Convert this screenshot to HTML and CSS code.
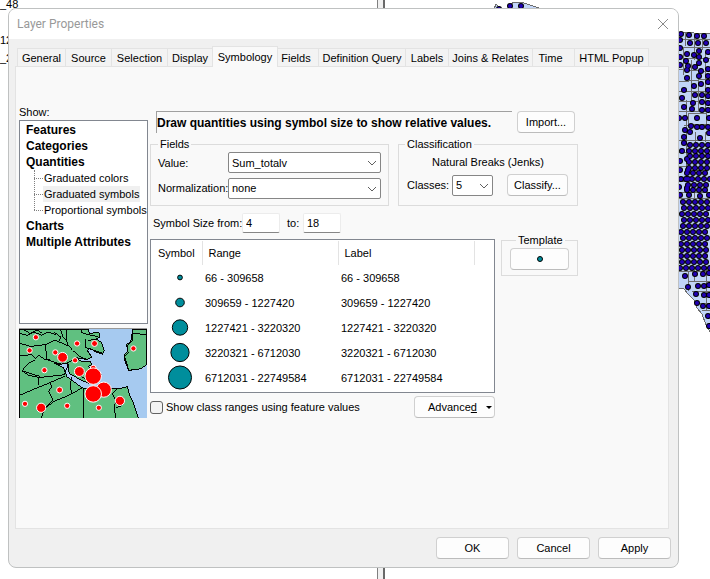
FILE: index.html
```html
<!DOCTYPE html>
<html lang="en">
<head>
<meta charset="utf-8">
<meta name="viewport" content="width=device-width, initial-scale=1">
<title>Layer Properties</title>
<link rel="stylesheet" href="styles.css">
</head>
<body>
<div class="desktop" aria-hidden="true">
  <div class="toc"><span>_48</span><span>12</span><span>_2</span></div>
  <div class="splitter"></div>
  <svg class="city" viewBox="490 0 220 340" width="220" height="340">
    <path class="ground" d="M494 9L496 4L498 6L502 9ZM508 9L513 2L524 3L542 9ZM678 32L710 34V332L706 325L702 314L697 308L694 300L688 294L684 289L678 288Z"/>
    <path class="streets" d="M678 39H710M678 47H710M683 58H710M678 69L710 72M678 82L710 79M678 91H710M678 101H710M678 111H710M688 113H706V124H688ZM684 125H710M678 140H710M678 152H686M678 166H686M678 181H686M694 192V199M678 192H710M678 198H710M678 271H710M688 281H710M692 291H710M699 303H710M702 310H710M685 33V46M694 34V60M702 34V50M683 47V75M691 60V112M698 70V112M705 52V112M686 100V180M695 132V142M705 132V142M694 270V282M706 268V310M688 271V291"/>
    <g class="dots-edge"><path id="pts" d="M510 6h0M521 6h0M499 9h0M681 34h0M689 35h0M697 36h0M704 36h0M680 40h0M690 43h0M698 43h0M706 43h0M680 48h0M687 54h0M694 55h0M699 51h0M708 52h0M680 57h0M686 61h0M699 57h0M706 60h0M680 65h0M688 66h0M695 67h0M687 70h0M701 71h0M708 69h0M699 63h0M687 78h0M699 76h0M708 76h0M694 86h0M701 84h0M708 82h0M684 90h0M708 90h0M682 98h0M695 95h0M702 95h0M708 96h0M693 103h0M702 102h0M708 103h0M684 107h0M692 109h0M702 110h0M708 110h0M679 118h0M685 118h0M697 118h0M709 118h0M685 130h0M691 126h0M697 127h0M702 127h0M708 127h0M690 132h0M684 137h0M700 138h0M709 133h0M684 143h0M682 151h0M680 161h0M687 159h0M680 170h0M688 170h0M681 179h0M688 179h0M679 187h0M687 188h0M680 195h0M689 195h0M700 196h0M709 195h0M685 276h0M695 274h0M703 274h0M709 273h0M688 287h0M698 286h0M704 286h0M709 285h0M696 294h0M704 295h0M709 295h0M697 303h0M703 306h0M709 306h0M708 316h0M709 326h0"/>
    <path id="rows" class="rows" d="M690 139V139M690 145H711M689 151H711M690 156H711M689 162H711M689 168H711M687 173H711M686 179H711M688 185H711M687 190H711M683 202H711M684 208H711M682 214H711M684 220H711M683 226H711M681 232H711M683 238H711M681 244H711M682 250H711M681 256H711M682 262H711M680 268H711"/></g>
    <g class="dots-fill"><use href="#pts"/><use href="#rows"/></g>
  </svg>
</div>

<main class="dialog" role="dialog" aria-labelledby="title">
  <header class="titlebar">
    <h1 id="title">Layer Properties</h1>
    <button class="close" aria-label="Close"><svg viewBox="0 0 12 12" width="12" height="12"><path d="M1 1L11 11M11 1L1 11"/></svg></button>
  </header>

  <div class="body">
    <nav class="tabs" role="tablist">
      <button role="tab">General</button>
      <button role="tab">Source</button>
      <button role="tab">Selection</button>
      <button role="tab">Display</button>
      <button role="tab" class="active" aria-selected="true">Symbology</button>
      <button role="tab" class="after">Fields</button>
      <button role="tab">Definition Query</button>
      <button role="tab">Labels</button>
      <button role="tab">Joins &amp; Relates</button>
      <button role="tab" class="time">Time</button>
      <button role="tab">HTML Popup</button>
    </nav>

    <section class="panel" role="tabpanel">
      <div class="side">
        <span class="show-label" id="show">Show:</span>
        <ul class="tree" aria-labelledby="show">
          <li>Features</li>
          <li>Categories</li>
          <li>Quantities
            <ul class="branch">
              <li><span>Graduated colors</span></li>
              <li><span class="selected">Graduated symbols</span></li>
              <li><span>Proportional symbols</span></li>
            </ul>
          </li>
          <li>Charts</li>
          <li>Multiple Attributes</li>
        </ul>
        <svg class="preview" viewBox="57 25 384 270" role="img" aria-label="Graduated symbols preview">
          <path class="land" d="M57 25H265L268 38L298 36L300 50L288 55L306 66L314 90L308 103L290 96L270 84L262 90L276 110L262 118L228 112L244 124L272 124L276 134L264 138L304 160L296 186L270 192L236 176L208 160L200 130L176 132L160 128L190 142L200 170L248 204L290 206L340 204L366 204L384 200L390 226L400 244L417 295H57Z"/>
          <path class="land" d="M400 25H441V134L424 146L404 148L388 151L375 120L374 105L385 90L382 72L394 62Z"/>
          <path class="bounds" d="M57 38L80 44L100 34L124 44L142 34L166 42L162 34M57 68L90 78L136 72L160 60L176 62L182 50L166 36M70 28L88 38L110 28L126 38M180 25L188 50L200 60L198 34L202 25M198 58L204 74L218 90L242 110L262 118L276 110L262 92M242 25L246 36L262 42L296 48M57 104L78 106L92 100L104 114L114 106L132 118H150M136 74L138 118L176 130L190 126M176 64L204 76M222 116L202 126L206 142M104 118L80 132L64 152L84 166L118 172L192 164L200 142M64 152L116 168L114 196M57 226L104 206L148 188L194 168M150 186L154 202L144 214L158 240L134 266L122 295M138 262L162 244L206 226L250 202M216 170L210 194L214 220M250 206L250 295M350 208L338 220L348 242L344 264L348 295M348 264L366 258M384 200L390 226L400 244L417 295M402 38L441 42M258 54V82L306 98M264 60L290 56M224 150L238 166L258 178M400 25L400 58L382 78L386 96L375 108L388 150L406 148"/>
          <g class="halo">
            <circle cx="106" cy="50" r="8"/><circle cx="87" cy="90" r="8"/><circle cx="165" cy="96" r="8"/><circle cx="231" cy="69" r="8"/><circle cx="284" cy="69" r="9"/><circle cx="402" cy="84" r="8"/><circle cx="225" cy="120" r="8"/><circle cx="132" cy="150" r="8"/><circle cx="187" cy="111" r="15"/><circle cx="238" cy="154" r="15"/><circle cx="280" cy="144" r="9"/><circle cx="280" cy="168" r="25"/><circle cx="312" cy="209" r="23"/><circle cx="280" cy="222" r="25"/><circle cx="178" cy="210" r="9"/><circle cx="73" cy="252" r="8"/><circle cx="122" cy="264" r="14"/><circle cx="201" cy="258" r="8"/><circle cx="297" cy="264" r="8"/><circle cx="361" cy="243" r="14"/>
          </g>
        </svg>
      </div>

      <div class="main">
        <div class="headline">
          <h2>Draw quantities using symbol size to show relative values.</h2>
          <button class="btn">Import...</button>
        </div>

        <div class="groups">
          <fieldset class="fields">
            <legend>Fields</legend>
            <label for="value">Value:</label>
            <span class="combo"><select id="value"><option>Sum_totalv</option></select><svg viewBox="0 0 10 6"><path d="M1 1L5 5L9 1"/></svg></span>
            <label for="norm">Normalization:</label>
            <span class="combo"><select id="norm"><option>none</option></select><svg viewBox="0 0 10 6"><path d="M1 1L5 5L9 1"/></svg></span>
          </fieldset>
          <fieldset class="classification">
            <legend>Classification</legend>
            <p>Natural Breaks (Jenks)</p>
            <div class="classes">
              <label for="classes">Classes:</label>
              <span class="combo"><select id="classes"><option>5</option></select><svg viewBox="0 0 10 6"><path d="M1 1L5 5L9 1"/></svg></span>
              <button class="btn">Classify...</button>
            </div>
          </fieldset>
        </div>

        <div class="sizes">
          <label for="from">Symbol Size from:</label><input id="from" type="text" value="4">
          <label for="to">to:</label><input id="to" type="text" value="18">
        </div>

        <div class="ranges">
          <div class="list">
            <table>
              <thead><tr><th class="c-symbol">Symbol</th><th class="c-range">Range</th><th class="c-label">Label</th><th class="c-rest"></th></tr></thead>
              <tbody>
                <tr><td><svg viewBox="-13 -13 26 26"><circle r="2.5"/></svg></td><td>66 - 309658</td><td>66 - 309658</td><td></td></tr>
                <tr><td><svg viewBox="-13 -13 26 26"><circle r="4.5"/></svg></td><td>309659 - 1227420</td><td>309659 - 1227420</td><td></td></tr>
                <tr><td><svg viewBox="-13 -13 26 26"><circle r="8"/></svg></td><td>1227421 - 3220320</td><td>1227421 - 3220320</td><td></td></tr>
                <tr><td><svg viewBox="-13 -13 26 26"><circle r="9.5"/></svg></td><td>3220321 - 6712030</td><td>3220321 - 6712030</td><td></td></tr>
                <tr><td><svg viewBox="-13 -13 26 26"><circle r="12"/></svg></td><td>6712031 - 22749584</td><td>6712031 - 22749584</td><td></td></tr>
              </tbody>
            </table>
          </div>
          <fieldset class="template">
            <legend>Template</legend>
            <button class="btn" aria-label="Template symbol"><svg viewBox="-4 -4 8 8" width="8" height="8"><circle r="2.5"/></svg></button>
          </fieldset>
        </div>

        <div class="options">
          <label><input type="checkbox">Show class ranges using feature values</label>
          <button class="btn advanced"><span>Advance<u>d</u></span><svg viewBox="0 0 6 3" width="6" height="3"><path d="M0 0H6L3 3Z"/></svg></button>
        </div>
      </div>
    </section>

    <footer class="actions">
      <button class="btn">OK</button>
      <button class="btn">Cancel</button>
      <button class="btn">Apply</button>
    </footer>
  </div>
</main>
</body>
</html>
```
FILE: styles.css
```css
* { box-sizing: border-box; }
body {
  margin: 0;
  min-height: 100vh;
  display: flex;
  flex-direction: column;
  background: #fff;
  color: #000;
  font: 11px/16px "Liberation Sans", Arial, sans-serif;
  overflow: hidden;
}
button, input, select { font: inherit; color: inherit; margin: 0; }
h1, h2, p, ul { margin: 0; padding: 0; }
ul { list-style: none; }

/* Application window behind the dialog */
.desktop { position: absolute; inset: 0; overflow: hidden; }
.toc { position: absolute; left: -5px; top: -4px; display: grid; grid-template-rows: 36px 18px 18px; }
.toc { left: 0; }
.splitter {
  position: absolute; left: 377px; top: 0; bottom: 0; width: 8px;
  background: #f0f0f0; border-left: 1px solid #808080; border-right: 2px solid #696969;
}
.city { position: absolute; left: 490px; top: 0; shape-rendering: crispEdges; }
.ground { fill: #c2d5f8; stroke: #6e6e6e; }
.streets { fill: none; stroke: #6e6e6e; }
.dots-edge, .dots-fill { shape-rendering: auto; stroke-linecap: round; }
.dots-edge { stroke: #000; stroke-width: 6; }
.dots-fill { stroke: #2100b5; stroke-width: 4; }
.rows { stroke-dasharray: 0 6; }

/* Dialog frame */
.dialog {
  position: relative;
  flex: 1;
  margin: 8px 31px 11px 8px;
  display: flex;
  flex-direction: column;
  background: #f0f0f0;
  border: 1px solid #bfc1c1;
  border-radius: 8px;
  overflow: hidden;
}
.titlebar {
  display: flex; justify-content: space-between; align-items: center;
  height: 30px; padding: 0 9px 0 8px; background: #fff;
}
.titlebar h1 { font: 400 12px/16px Roboto, sans-serif; color: #999; }
.close { display: flex; padding: 0; border: 0; background: none; }
.close svg { fill: none; stroke: #8a8a8a; }
.body { flex: 1; display: flex; flex-direction: column; padding: 7px 7px 8px 6px; }

/* Tabs */
.tabs {
  display: grid;
  grid-template-columns: 48px 46px 56px 45px 66px 40px 87px 43px 84px 42px 75px;
  align-items: end;
  padding-left: 2px;
  height: 20px;
}
.tabs button {
  height: 18px; padding: 0; border: 1px solid #e3e3e3; border-width: 1px 0 0 1px;
  background: #f3f3f3; white-space: nowrap; line-height: 18px;
}
.tabs button:last-child { border-right-width: 1px; }
.tabs .active {
  height: 21px; margin-bottom: -1px; z-index: 1; background: #f9f9f9; border-right-width: 1px;
}
.tabs .after { border-left: 0; padding-right: 4px; }
.tabs .time { padding-right: 6px; }

.panel {
  flex: 1; display: grid; grid-template-columns: 129px minmax(0, 1fr); gap: 2px;
  margin-right: 2px; padding: 37px 3px 0;
  background: #f9f9f9; border: 1px solid #e3e3e3;
}

/* Left column */
.side { display: flex; flex-direction: column; }
.show-label { height: 16px; }
.tree {
  height: 204px; padding: 1px 0 0 6px; background: #fff; border: 1px solid #828790;
  font-size: 12px; font-weight: 700;
}
.tree > li { line-height: 16px; }
.branch { position: relative; margin-left: 8px; font-size: 11px; font-weight: 400; }
.branch::before {
  content: ""; position: absolute; left: 0; top: 0; height: 40px; border-left: 1px dotted #808080;
}
.branch li { display: flex; align-items: center; white-space: nowrap; }
.branch li::before { content: ""; flex: none; width: 9px; border-top: 1px dotted #808080; }
.branch span { padding: 0 1px; }
.branch .selected { background: #f0f0f0; }
.preview {
  width: 128px; height: 90px; margin-top: 4px; background: #a6caf0;
  border-top: 1px solid #999; shape-rendering: crispEdges;
}
.land { fill: #60c080; stroke: #000; stroke-width: 3; }
.bounds { fill: none; stroke: #000; stroke-width: 3; }
.halo { fill: #f00; stroke: #fff; stroke-width: 3; shape-rendering: auto; }

/* Right column */
.main { width: 428px; padding-top: 7px; }
.btn {
  height: 22px; padding: 0; background: #fdfdfd; border: 1px solid #d0d0d0;
  border-bottom-color: #bcbcbc; border-radius: 4px; white-space: nowrap;
}
.headline { display: grid; grid-template-columns: 1fr 58px; gap: 5px; padding: 0 3px 0 6px; }
.headline h2 {
  height: 22px; font-size: 12px; line-height: 22px; white-space: nowrap;
  border: 1px solid #a0a0a0; border-width: 1px 0 0 1px;
}
.groups { display: grid; grid-template-columns: 239px 1fr; gap: 9px; margin-top: 3px; }
fieldset { margin: 0; padding: 0; min-width: 0; border: 1px solid #dcdcdc; }
legend { margin-left: 6px; padding: 0 2px; }
.fields {
  display: grid; grid-template-columns: 70px 1fr; gap: 4px 0; align-items: center;
  padding: 0 7px 6px;
}
.fields, .classification { height: 70px; }
.fields legend { margin-left: 0; }
.fields label { white-space: nowrap; }
.combo { position: relative; display: block; }
.combo select {
  display: block; appearance: none; width: 100%; height: 21px; padding: 0 3px;
  background: #fff; border: 1px solid #868686; border-radius: 2px;
}
.combo svg {
  position: absolute; right: 4px; top: 8px; width: 10px; height: 6px;
  fill: none; stroke: #606060; pointer-events: none;
}
.classification p { text-align: center; line-height: 20px; }
.classes { display: grid; grid-template-columns: 45px 41px 61px; align-items: center; padding-left: 8px; margin-top: 2px; }
.classes .btn { margin-left: 14px; width: 61px; }

.sizes { display: flex; align-items: center; height: 20px; margin: 7px 0 6px; padding-left: 3px; white-space: nowrap; }
.sizes label:first-child { width: 89px; }
.sizes label:nth-of-type(2) { width: 16px; margin-left: 7px; }
.sizes input {
  width: 38px; height: 20px; padding: 0 3px; background: #fff;
  border: 1px solid #ececec; border-bottom-color: #868686; border-radius: 2px;
}

.ranges { display: grid; grid-template-columns: 345px 1fr; gap: 6px; align-items: start; }
.list { height: 154px; padding-top: 1px; background: #fff; border: 1px solid #828790; }
table { width: 100%; border-collapse: collapse; table-layout: fixed; }
.c-symbol { width: 51px; }
.c-range, .c-label { width: 136px; }
th { height: 24px; padding: 0 0 0 6px; font-weight: 400; text-align: left; border-right: 1px solid #e3e3e3; }
th.c-symbol { padding-left: 7px; }
th.c-rest { border-right: 0; }
td { height: 25px; padding: 0 0 0 3px; white-space: nowrap; }
td:first-child { padding: 0 0 0 16px; }
td svg { display: block; width: 26px; height: 25px; overflow: visible; }
td circle, .template circle { fill: #008e9c; stroke: #000; }
.template { margin-top: -7px; height: 44px; padding: 0 8px; }
.template legend { margin-left: 6px; }
.template .btn { display: flex; align-items: center; justify-content: center; width: 100%; }
.options { display: flex; justify-content: space-between; align-items: center; width: 345px; margin-top: 3px; }
.options label { display: flex; align-items: center; gap: 3px; }
.options input {
  appearance: none; width: 13px; height: 13px; background: #f3f3f3;
  border: 1px solid #626262; border-radius: 3px;
}
.advanced { display: flex; align-items: center; justify-content: space-between; width: 81px; padding: 0 2px 0 13px; }
.advanced svg { flex: none; }

.actions { display: flex; justify-content: flex-end; gap: 8px; margin-top: 8px; }
.actions .btn { width: 73px; }
```
